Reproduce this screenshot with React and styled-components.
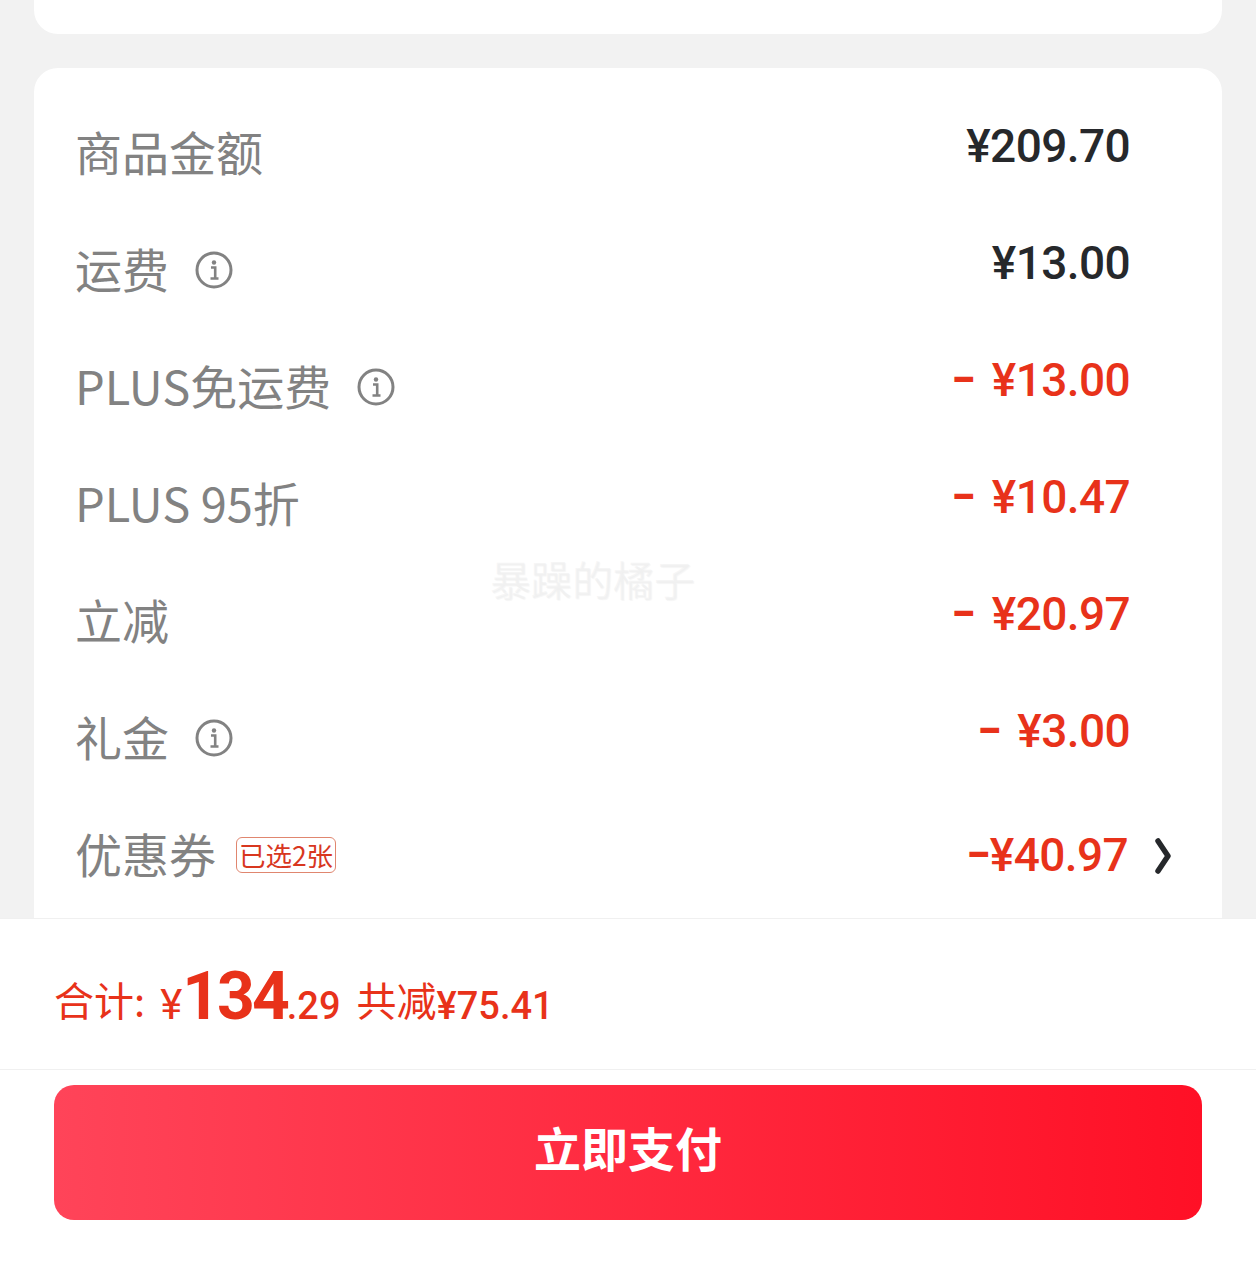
import styled, { createGlobalStyle } from "styled-components"

const GlobalStyle = createGlobalStyle`
    html, body {
        margin: 0;
        padding: 0;
        background: #f2f2f2;
    }
`
const Page = styled.main`
    position: relative;
    display: flex;
    flex-direction: column;
    height: 1261px;
    overflow: hidden;
    background: #f2f2f2;
    font-family: "Noto Sans CJK SC", sans-serif;
`
const TopCard = styled.div`
    flex: none;
    height: 34px;
    margin: 0 34px;
    background: #fff;
    border-radius: 0 0 24px 24px;
`
const Card = styled.section`
    flex: 1;
    min-height: 0;
    margin: 34px 34px 0;
    padding-top: 27px;
    background: #fff;
    border-radius: 24px 24px 0 0;
`
const Row = styled.div`
    display: flex;
    align-items: center;
    justify-content: space-between;
    height: 117px;
    padding: 0 ${(p) => (p.$arrow ? "49px" : "92px")} 0 41px;
`
const Label = styled.div`
    display: flex;
    align-items: center;
    margin-bottom: 2px;
    font-size: 47px;
    line-height: 58px;
    color: #828282;
`
const LabelText = styled.span`
    margin-bottom: 4px;
`
const InfoIcon = styled.svg`
    width: 38px;
    height: 38px;
    margin-left: 26px;
`
const Tag = styled.span`
    box-sizing: border-box;
    display: flex;
    align-items: center;
    justify-content: center;
    width: 100px;
    height: 36px;
    margin-left: 20px;
    border: 1px solid #e0866f;
    border-radius: 6px;
    font-size: 26.5px;
    color: #d8371f;
`
const ValueWrap = styled.div`
    display: flex;
    align-items: center;
    gap: 27px;
`
const Value = styled.div`
    display: flex;
    gap: ${(p) => p.$gap || 0}px;
    padding-bottom: ${(p) => (p.$arrow ? "2px" : "15px")};
    font-family: Roboto, sans-serif;
    font-size: 46px;
    font-weight: 500;
    line-height: 56px;
    letter-spacing: -0.6px;
    color: ${(p) => (p.$red ? "#e8321a" : "#26282b")};
`
const Minus = styled.span`
    display: inline-block;
    font-weight: 700;
    transform: scaleX(0.8);
    transform-origin: right center;
`
const Footer = styled.footer`
    flex: none;
    background: #fff;
    border-top: 1px solid #f0f0f0;
`
const TotalBar = styled.div`
    display: flex;
    align-items: baseline;
    box-sizing: border-box;
    height: 151px;
    padding: 40px 0 0 54px;
    color: #e8321a;
    font-size: 40px;
    line-height: 76px;
    border-bottom: 1px solid #f0f0f0;
`
const TotalText = styled.span`
    margin-left: ${(p) => p.$left || 0}px;
    transform: translateY(-3px);
`
const Digits = styled.span`
    font-family: Roboto, sans-serif;
    font-size: ${(p) => p.$size || 38}px;
    font-weight: ${(p) => p.$weight || 500};
    letter-spacing: ${(p) => p.$spacing || 0}px;
    margin-left: ${(p) => p.$left || 0}px;
`
const ButtonBar = styled.div`
    box-sizing: border-box;
    height: 191px;
    padding: 15px 54px 0;
`
const PayButton = styled.button`
    display: block;
    width: 100%;
    height: 135px;
    padding: 0 0 12px;
    border: 0;
    border-radius: 20px;
    background: linear-gradient(90deg, #ff4459, #ff1026);
    color: #fff;
    font-family: "Noto Sans CJK SC", sans-serif;
    font-size: 47px;
    font-weight: 700;
`
const Watermark = styled.div`
    position: absolute;
    left: 490px;
    top: 553px;
    font-size: 41px;
    line-height: 50px;
    color: rgba(235, 235, 235, 0.45);
    text-shadow: 1px 1px 1px rgba(0, 0, 0, 0.04);
    white-space: nowrap;
`

const Info = () => (
    <InfoIcon viewBox="0 0 38 38">
        <circle cx="19" cy="19" r="17" fill="none" stroke="#828282" strokeWidth="3" />
        <circle cx="19" cy="11.5" r="2.2" fill="#828282" />
        <path d="M16 16.5h4.2v11M15.5 27.5h8" fill="none" stroke="#828282" strokeWidth="2.6" />
    </InfoIcon>
)

const rows = [
    { id: 1, label: "商品金额", value: "¥209.70" },
    { id: 2, label: "运费", info: true, value: "¥13.00" },
    { id: 3, label: "PLUS免运费", info: true, red: true, value: "¥13.00", minus: "–" },
    { id: 4, label: "PLUS 95折", red: true, value: "¥10.47", minus: "–" },
    { id: 5, label: "立减", red: true, value: "¥20.97", minus: "–" },
    { id: 6, label: "礼金", info: true, red: true, value: "¥3.00", minus: "–" },
]

const App = () => {
    return (
        <Page>
            <GlobalStyle />
            <TopCard />
            <Card>
                {rows.map((row) => (
                    <Row key={row.id}>
                        <Label>
                            <LabelText>{row.label}</LabelText>
                            {row.info && <Info />}
                        </Label>
                        <Value $red={row.red} $gap={17}>
                            {row.minus && <Minus>{row.minus}</Minus>}
                            <span>{row.value}</span>
                        </Value>
                    </Row>
                ))}
                <Row $arrow>
                    <Label>
                        <LabelText>优惠券</LabelText>
                        <Tag>已选2张</Tag>
                    </Label>
                    <ValueWrap>
                        <Value $red $arrow>
                            <Minus>–</Minus>
                            <span>¥40.97</span>
                        </Value>
                        <svg width="18" height="36" viewBox="0 0 18 36">
                            <path d="M3 3l10 15L3 33" fill="none" stroke="#26282b" strokeWidth="5.5" strokeLinecap="round" strokeLinejoin="round" />
                        </svg>
                    </ValueWrap>
                </Row>
            </Card>
            <Footer>
                <TotalBar>
                    <TotalText>合计:</TotalText>
                    <Digits $left={15} $size={42} $weight={400}>¥</Digits>
                    <Digits $size={66} $weight={700} $spacing={-3}>134</Digits>
                    <Digits>.29</Digits>
                    <TotalText $left={16}>共减</TotalText>
                    <Digits>¥75.41</Digits>
                </TotalBar>
                <ButtonBar>
                    <PayButton>立即支付</PayButton>
                </ButtonBar>
            </Footer>
            <Watermark>暴躁的橘子</Watermark>
        </Page>
    )
}
export default App
